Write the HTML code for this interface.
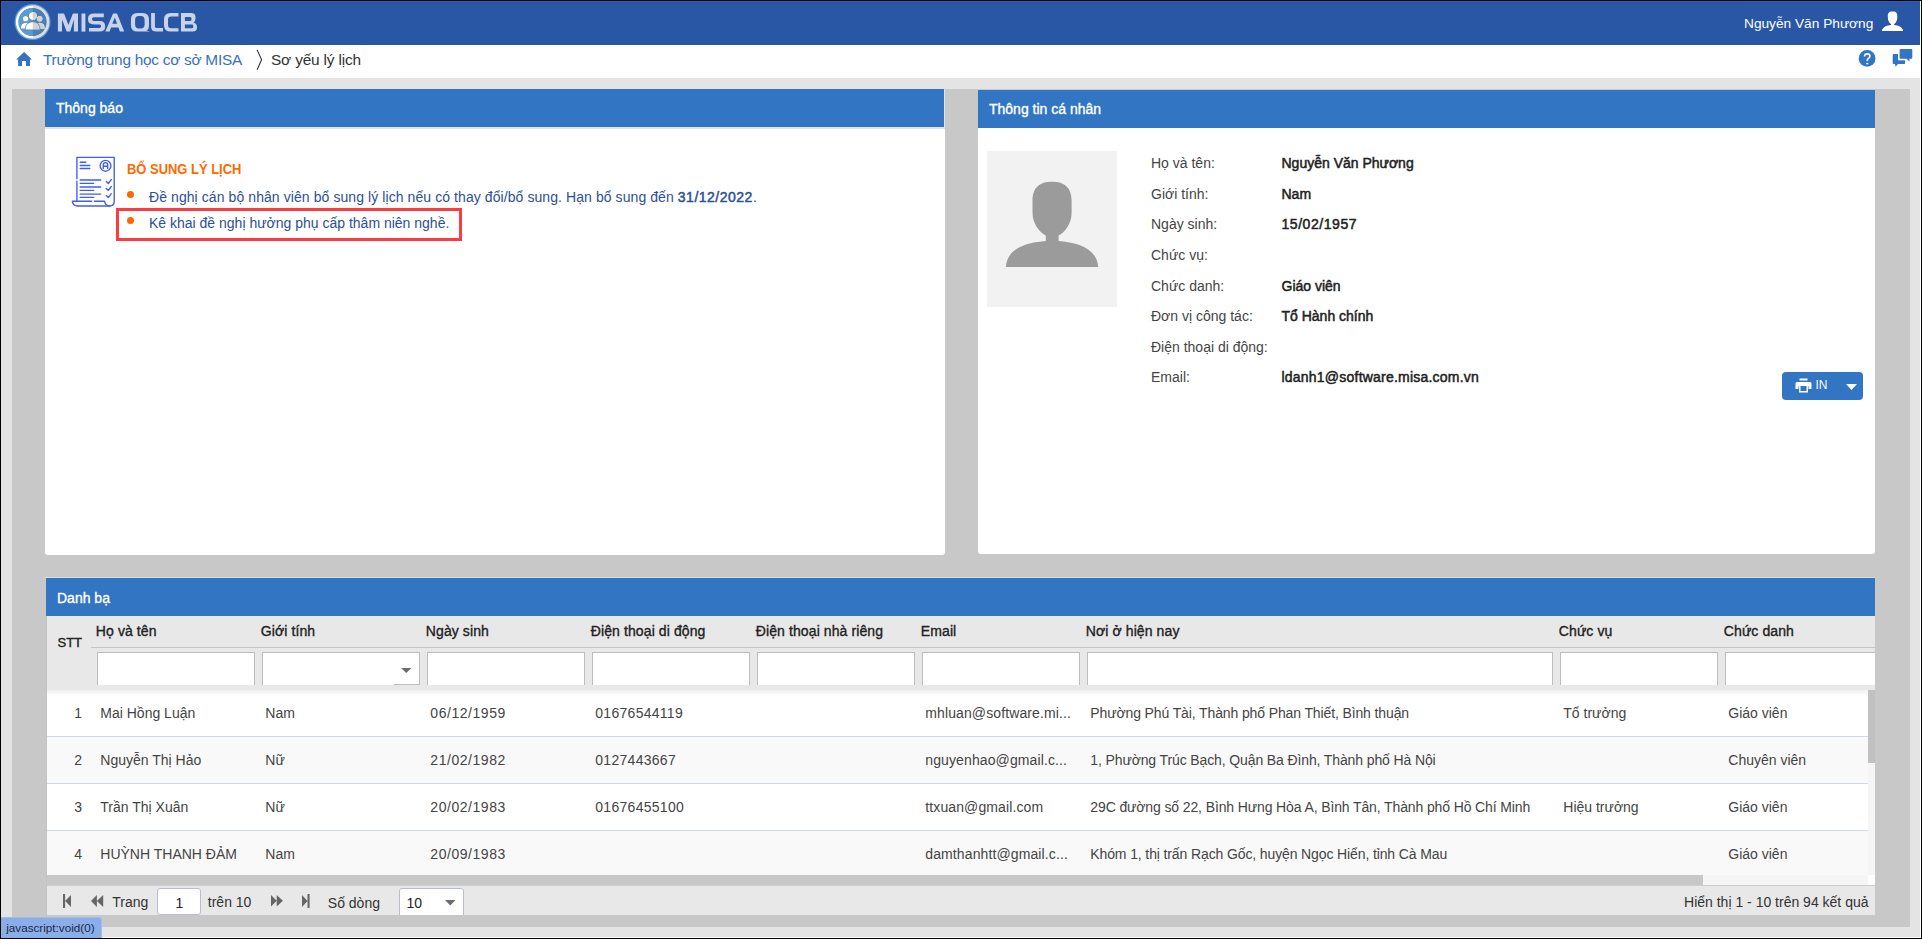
<!DOCTYPE html>
<html><head><meta charset="utf-8">
<style>
*{box-sizing:border-box;margin:0;padding:0}
html,body{width:1922px;height:939px;overflow:hidden;background:#000;font-family:"Liberation Sans",sans-serif}
.t{position:absolute;white-space:nowrap;line-height:1}
#page{position:absolute;left:1px;top:1px;width:1920px;height:937px;background:#fff;overflow:hidden}
#inner{position:absolute;left:0;top:0;width:1919px;height:936px;background:#e4e4e4;overflow:hidden}
#hdr{position:absolute;left:0;top:0;width:1919px;height:44px;background:#2957a5}
#bc{position:absolute;left:0;top:44px;width:1919px;height:33px;background:#fff}
#wrap{position:absolute;left:11px;top:88px;width:1898px;height:838px;background:#c8c8c8}
.panel{position:absolute;background:#fff;border-radius:0 0 3px 3px}
.ph{position:absolute;left:0;top:0;right:0;height:38px;background:#3175c3;color:#fff;font-size:14px;font-weight:bold}
svg{position:absolute;overflow:visible}
.r{position:absolute}
</style></head><body>

<div class="r" style="left:1px;top:1px;width:1920px;height:937px;background:#fff"></div>
<div class="r" style="left:1px;top:1px;width:1919px;height:936px;background:#e4e4e4"></div>
<div style="position:absolute;left:1px;top:1px;width:1919px;height:936px">
  <!-- HEADER -->
  <div id="hdr">
    <div style="position:absolute;left:0;top:0;width:1919px;height:1px;background:#2b5dae"></div>
    <div style="position:absolute;left:0;top:0;width:1px;height:44px;background:#2b5dae"></div>
    <svg style="left:11px;top:1px" width="40" height="40" viewBox="0 0 40 40">
      <defs>
        <clipPath id="lc"><circle cx="20.5" cy="20" r="14.1"/></clipPath>
        <clipPath id="rh"><rect x="20.7" y="0" width="20" height="40"/></clipPath>
        <radialGradient id="halo" cx="0.5" cy="0.5" r="0.5">
          <stop offset="0.93" stop-color="#64a3dc"/><stop offset="1" stop-color="#6aa8de" stop-opacity="0"/>
        </radialGradient>
      </defs>
      <circle cx="20.5" cy="20" r="18.6" fill="url(#halo)"/>
      <circle cx="20.5" cy="20" r="15.3" fill="none" stroke="#fff" stroke-width="2.6"/>
      <path d="M20.7 3.4 A16.6 16.6 0 0 1 20.7 36.6 L20.7 34.1 A14.1 14.1 0 0 0 20.7 5.9 Z" fill="#dcdcdc"/>
      <g clip-path="url(#lc)">
        <rect x="0" y="0" width="20.7" height="40" fill="#5a9bd6"/>
        <rect x="20.7" y="0" width="20" height="40" fill="#4a80b6"/>
      </g>
      <g id="ppl">
        <circle cx="13.6" cy="16.8" r="2.8"/><circle cx="27.7" cy="16.8" r="2.8"/>
        <path d="M8.5 26.8 Q8.7 21 13.5 20.8 Q16 20.9 17 22 L16 26.8 Z"/>
        <path d="M32.9 26.8 Q32.7 21 27.9 20.8 Q25.4 20.9 24.4 22 L25.4 26.8 Z"/>
        <circle cx="20.9" cy="14" r="4"/>
        <path d="M13.2 27.9 Q13.3 19.9 20.8 19.7 Q28 19.9 28.1 27.9 Z" stroke="#4f89c4" stroke-width="0.8"/>
      </g>
      <use href="#ppl" fill="#fff"/>
      <use href="#ppl" fill="#d2d2d2" clip-path="url(#rh)"/>
    </svg>
    <svg style="left:54px;top:7px" width="145" height="30" viewBox="0 0 145 30">
      <g fill="#c6d3ea" fill-rule="evenodd">
        <path d="M2.9 23.6 L2.9 5.5 L9.0 5.5 L13.45 17.0 L17.9 5.5 L23 5.5 L23 23.6 L18.9 23.6 L18.9 11.6 L15.2 23.6 L11.7 23.6 L7.0 11.6 L7.0 23.6 Z"/>
        <path d="M26.5 5.5 L30.4 5.5 L30.4 23.6 L26.5 23.6 Z"/>
        <path d="M48.8 5.5 L39 5.5 Q33 5.5 33 10.6 L33 11.2 Q33 16.4 39 16.4 L44.6 16.4 Q46.1 16.4 46.1 18.1 Q46.1 19.9 44.6 19.9 L34 19.9 L34 23.6 L44.6 23.6 Q50.2 23.6 50.2 18.2 Q50.2 12.9 44.6 12.9 L38.7 12.9 Q37 12.9 37 11 Q37 9.2 38.7 9.2 L48.8 9.2 Z"/>
        <path d="M50.3 23.6 L58.1 5.5 L62 5.5 L69.2 23.6 L64.9 23.6 L63.4 19.5 L56.1 19.5 L54.6 23.6 Z M57.3 15.8 L62.1 15.8 L59.8 9.6 Z"/>
        <g transform="translate(70 0)">
          <path d="M12.3 5.1 L17.6 5.1 Q24 5.1 24 12 L24 16.7 Q24 21.5 21.5 22.6 L25 23.6 L19 23.6 L12.3 23.6 Q5.9 23.6 5.9 16.7 L5.9 12 Q5.9 5.1 12.3 5.1 Z M13.9 8.1 Q10.1 8.1 10.1 12.3 L10.1 16.5 Q10.1 20.6 13.9 20.6 L15.8 20.6 Q19.6 20.6 19.6 16.5 L19.6 12.3 Q19.6 8.1 15.8 8.1 Z"/>
          <path d="M26.1 5.1 L29.9 5.1 L29.9 18.3 Q29.9 19.9 31.5 19.9 L38 19.9 L38 23.6 L31.3 23.6 Q26.1 23.6 26.1 18.4 Z"/>
          <path d="M53.5 5.1 L45.6 5.1 Q39 5.1 39 11.7 L39 17 Q39 23.6 45.6 23.6 L53.5 23.6 L53.5 20.3 L46.3 20.3 Q43 20.3 43 17 L43 11.7 Q43 8.4 46.3 8.4 L53.5 8.4 Z"/>
          <path d="M56 5.1 L66.2 5.1 Q70.5 5.1 70.5 9.3 L70.5 10.6 Q70.5 13.4 68.6 14.6 Q72 15.6 72 19.3 L72 19.5 Q72 23.6 67.8 23.6 L56 23.6 Z M59.9 8.9 L65.2 8.9 Q66.4 8.9 66.4 10 L66.4 11.9 Q66.4 13 65.2 13 L59.9 13 Z M59.9 16.4 L67 16.4 Q68.2 16.4 68.2 17.5 L68.2 19.2 Q68.2 20.3 67 20.3 L59.9 20.3 Z"/>
        </g>
      </g>
    </svg>
    <div class="t" id="uname" style="left:1743px;top:15.5px;font-size:13.7px;color:#fff">Nguyễn Văn Phương</div>
    <svg style="left:1880px;top:10px" width="24" height="21" viewBox="0 0 24 21">
      <path fill="#fff" d="M11.55 0.6 C7.3 0.6 6.8 2.4 6.8 6.2 C6.8 9.6 8.4 12.2 10 13 L10 14.1 C5.5 14.6 1.4 16.2 1 20 L22.1 20 C21.7 16.2 17.6 14.6 13.1 14.1 L13.1 13 C14.7 12.2 16.3 9.6 16.3 6.2 C16.3 2.4 15.8 0.6 11.55 0.6 Z"/>
    </svg>
  </div>
  <!-- BREADCRUMB -->
  <div id="bc">
    <svg style="left:14px;top:7px" width="18" height="16" viewBox="0 0 18 16">
      <path fill="#3473c4" d="M9.1 0 L17 7.4 L15 7.4 L15 13.9 L11 13.9 L11 9 L7 9 L7 13.9 L3.1 13.9 L3.1 7.4 L1.1 7.4 Z"/>
    </svg>
    <div class="t" id="bc1" style="left:42px;top:7.0px;font-size:15.4px;letter-spacing:-0.26px;color:#3a6fbd">Trường trung học cơ sở MISA</div>
    <svg style="left:254px;top:4px" width="10" height="22" viewBox="0 0 10 22">
      <path d="M2.1 0.9 L6.6 10.8 L2.1 20.8" fill="none" stroke="#2a2a2a" stroke-width="1.05"/>
    </svg>
    <div class="t" id="bc2" style="left:270px;top:7.0px;font-size:15.4px;letter-spacing:-0.16px;color:#333">Sơ yếu lý lịch</div>
    <svg style="left:1857px;top:4px" width="18" height="18" viewBox="0 0 18 18">
      <circle cx="9.1" cy="9.4" r="8.4" fill="#3175c3"/>
      <path d="M6.5 7.5 Q6.6 4.9 9.2 4.9 Q11.9 4.9 11.9 7.1 Q11.9 8.5 10.4 9.4 Q9.2 10.2 9.2 11.9" fill="none" stroke="#fff" stroke-width="1.6"/>
      <rect x="8.2" y="13.9" width="2" height="1.4" fill="#fff"/>
    </svg>
    <svg style="left:1889px;top:1px" width="26" height="22" viewBox="0 0 26 22">
      <path fill="#3175c3" d="M3.7 8.1 L14.1 8.1 Q15.1 8.1 15.1 9.1 L15.1 16.9 Q15.1 17.9 14.1 17.9 L8 17.9 L5.5 20.7 L5 17.9 L3.7 17.9 Q2.7 17.9 2.7 16.9 L2.7 9.1 Q2.7 8.1 3.7 8.1 Z"/>
      <rect x="8.1" y="1.6" width="15" height="12.7" fill="#fff"/>
      <path fill="#3175c3" d="M10.6 3.1 L21.3 3.1 Q22.3 3.1 22.3 4.1 L22.3 11.8 Q22.3 12.8 21.3 12.8 L19.5 12.8 L19.5 15.5 L16.5 12.8 L10.6 12.8 Q9.6 12.8 9.6 11.8 L9.6 4.1 Q9.6 3.1 10.6 3.1 Z"/>
    </svg>
  </div>

</div>
<div class="r" style="left:12px;top:89px;width:1898px;height:838px;background:#c8c8c8"></div>
<div class="r" style="left:45px;top:89px;width:900px;height:466px;background:#fff;border-radius:0 0 3px 3px"></div>
<div class="r" style="left:45px;top:89px;width:900px;height:40px;background:#e3e3e3"></div>
<div class="r" style="left:45px;top:89px;width:899px;height:38px;background:#3175c3"></div>
<div class="t" style="left:56.00px;top:101.15px;font-size:14px;color:#fff;-webkit-text-stroke:0.35px currentColor;">Thông báo</div>
<svg style="left:66px;top:150px" width="60" height="62" viewBox="0 0 60 62">
  <g fill="none" stroke="#3f5cf6" stroke-width="1.35" stroke-linecap="round" stroke-linejoin="round">
    <path d="M10.9 28.8 L10.9 7.3 L48.2 7.3 L48.2 51.5 Q48.2 56 43.5 56 Q39.5 56 38.5 51.2 L28.4 51.2"/>
    <path d="M10.9 31.2 L10.9 51.2 L6.3 51.2 Q7 56 11.5 56 L43.5 56"/>
    <path d="M25.7 51.2 L11 51.2"/>
    <circle cx="39.5" cy="15.8" r="5.4"/>
    <path d="M37.3 18.6 L37.3 15 Q37.3 12.6 39.5 12.6 Q41.7 12.6 41.7 15 L41.7 18.6 M37.3 16.2 L41.7 16.2"/>
    <path d="M14.2 12.2 L19.8 12.2 M14.2 15.5 L23.8 15.5 M14.2 18.5 L23.8 18.5"/>
    <path d="M14.2 30 L34.7 30 M14.2 33.3 L27.7 33.3 M14.2 37 L34.7 37 M14.2 40.4 L27.7 40.4 M14.2 44.1 L34.7 44.1 M14.2 47.4 L27.7 47.4"/>
    <path d="M40.3 31.5 L42.3 33.5 L45.3 29.6 M40.3 38.4 L42.3 40.4 L45.3 36.5 M40.3 45.6 L42.3 47.6 L45.3 43.7"/>
  </g>
</svg>
<div class="t" style="left:127.20px;top:162.15px;font-size:14px;color:#ff6a00;font-weight:bold;transform:scaleX(0.925);transform-origin:0 0;">BỔ SUNG LÝ LỊCH</div>
<div class="r" style="left:127px;top:190.8px;width:7px;height:7px;border-radius:50%;background:#ff6600"></div>
<div class="t" style="left:149.00px;top:190.15px;font-size:14px;color:#2c4f9a;letter-spacing:0.08px;">Đề nghị cán bộ nhân viên bổ sung lý lịch nếu có thay đổi/bổ sung. Hạn bổ sung đến <b style="font-weight:normal;-webkit-text-stroke:0.5px currentColor;letter-spacing:0.5px">31/12/2022</b>.</div>
<div class="r" style="left:127px;top:216.9px;width:7px;height:7px;border-radius:50%;background:#ff6600"></div>
<div class="t" style="left:149.00px;top:216.15px;font-size:14px;color:#2c4f9a;">Kê khai đề nghị hưởng phụ cấp thâm niên nghề.</div>
<div class="r" style="left:116px;top:208px;width:346px;height:33px;border:3px solid #fe3b3f;box-sizing:border-box"></div>
<div class="r" style="left:978px;top:90px;width:897px;height:464px;background:#fff;border-radius:0 0 3px 3px"></div>
<div class="r" style="left:978px;top:90px;width:897px;height:38px;background:#3175c3"></div>
<div class="t" style="left:989.00px;top:102.15px;font-size:14px;color:#fff;-webkit-text-stroke:0.35px currentColor;">Thông tin cá nhân</div>
<div class="r" style="left:987px;top:151px;width:130px;height:156px;background:#f2f2f2">
  <svg style="left:0;top:0" width="130" height="156" viewBox="0 0 130 156">
    <path fill="#9b9b9b" d="M65 30.7 C53 30.7 45.5 36 45.5 50 L45.5 62 C45.5 72 52 81 58.8 84.5 L58.8 90 C40 91.5 20 97 18.9 116 L111.2 116 C110 97 90 91.5 71.6 90 L71.6 84.5 C78.5 81 84.6 72 84.6 62 L84.6 50 C84.6 36 77 30.7 65 30.7 Z"/>
  </svg>
</div>
<div class="t" style="left:1151.00px;top:156.15px;font-size:14px;color:#444;">Họ và tên:</div>
<div class="t" style="left:1281.50px;top:156.15px;font-size:14px;color:#222;-webkit-text-stroke:0.5px currentColor;">Nguyễn Văn Phương</div>
<div class="t" style="left:1151.00px;top:186.75px;font-size:14px;color:#444;">Giới tính:</div>
<div class="t" style="left:1281.50px;top:186.75px;font-size:14px;color:#222;-webkit-text-stroke:0.5px currentColor;">Nam</div>
<div class="t" style="left:1151.00px;top:217.35px;font-size:14px;color:#444;">Ngày sinh:</div>
<div class="t" style="left:1281.50px;top:217.35px;font-size:14px;color:#222;-webkit-text-stroke:0.5px currentColor;letter-spacing:0.55px;">15/02/1957</div>
<div class="t" style="left:1151.00px;top:247.95px;font-size:14px;color:#444;">Chức vụ:</div>
<div class="t" style="left:1151.00px;top:278.55px;font-size:14px;color:#444;">Chức danh:</div>
<div class="t" style="left:1281.50px;top:278.55px;font-size:14px;color:#222;-webkit-text-stroke:0.5px currentColor;">Giáo viên</div>
<div class="t" style="left:1151.00px;top:309.15px;font-size:14px;color:#444;">Đơn vị công tác:</div>
<div class="t" style="left:1281.50px;top:309.15px;font-size:14px;color:#222;-webkit-text-stroke:0.5px currentColor;">Tổ Hành chính</div>
<div class="t" style="left:1151.00px;top:339.75px;font-size:14px;color:#444;">Điện thoại di động:</div>
<div class="t" style="left:1151.00px;top:370.35px;font-size:14px;color:#444;">Email:</div>
<div class="t" style="left:1281.50px;top:370.35px;font-size:14px;color:#222;-webkit-text-stroke:0.5px currentColor;letter-spacing:0.22px;">ldanh1@software.misa.com.vn</div>
<div class="r" style="left:1782px;top:372px;width:81px;height:28px;border-radius:4px;background:#3175c3">
  <svg style="left:13px;top:6px" width="17" height="15" viewBox="0 0 17 15">
    <path fill="#fff" d="M4.5 0.5 L12.5 0.5 L12.5 2.5 L4.5 2.5 Z M2 4 L15 4 Q16.5 4 16.5 5.5 L16.5 11 L13.5 11 L13.5 8 L3.5 8 L3.5 11 L0.5 11 L0.5 5.5 Q0.5 4 2 4 Z"/>
    <path fill="none" stroke="#fff" stroke-width="1.5" d="M4.75 7.5 L4.75 13.75 L12.25 13.75 L12.25 7.5"/>
  </svg>
  <svg style="left:64px;top:12px" width="11" height="6" viewBox="0 0 11 6"><path fill="#fff" d="M0 0 L11 0 L5.5 6 Z"/></svg>
</div>
<div class="t" style="left:1815.50px;top:378.84px;font-size:12px;color:#fff;">IN</div>
<div class="r" style="left:45px;top:577px;width:1830px;height:1px;background:#dcdcdc"></div>
<div class="r" style="left:46px;top:578px;width:1829px;height:337px;background:#fff"></div>
<div class="r" style="left:46px;top:578px;width:1829px;height:38px;background:#3175c3"></div>
<div class="t" style="left:57.00px;top:591.15px;font-size:14px;color:#fff;-webkit-text-stroke:0.35px currentColor;">Danh bạ</div>
<div class="r" style="left:46px;top:616px;width:1829px;height:74px;background:#e8e8e8"></div>
<div class="r" style="left:46px;top:616px;width:1px;height:299px;background:#c4c4c4"></div>
<div class="r" style="left:91px;top:647px;width:1784px;height:1px;background:#c4c4c4"></div>
<div class="t" style="left:57.50px;top:636.00px;font-size:13px;color:#222;-webkit-text-stroke:0.35px currentColor;">STT</div>
<div class="r" style="left:47px;top:616px;width:1828px;height:74px;overflow:hidden">
<div class="t" style="left:48.8px;top:8.15px;font-size:14px;color:#222;letter-spacing:0.1px;-webkit-text-stroke:0.35px currentColor;">Họ và tên</div>
<div class="r" style="left:50px;top:36px;width:158px;height:33px;background:#fff;border:1px solid #bdbdbd;border-bottom:none;box-sizing:border-box"></div>
<div class="t" style="left:213.8px;top:8.15px;font-size:14px;color:#222;letter-spacing:0.1px;-webkit-text-stroke:0.35px currentColor;">Giới tính</div>
<div class="r" style="left:215px;top:36px;width:158px;height:33px;background:#fff;border:1px solid #bdbdbd;border-bottom:none;box-sizing:border-box"></div>
<div class="t" style="left:378.8px;top:8.15px;font-size:14px;color:#222;letter-spacing:0.1px;-webkit-text-stroke:0.35px currentColor;">Ngày sinh</div>
<div class="r" style="left:380px;top:36px;width:158px;height:33px;background:#fff;border:1px solid #bdbdbd;border-bottom:none;box-sizing:border-box"></div>
<div class="t" style="left:543.8px;top:8.15px;font-size:14px;color:#222;letter-spacing:0.1px;-webkit-text-stroke:0.35px currentColor;">Điện thoại di động</div>
<div class="r" style="left:545px;top:36px;width:158px;height:33px;background:#fff;border:1px solid #bdbdbd;border-bottom:none;box-sizing:border-box"></div>
<div class="t" style="left:708.8px;top:8.15px;font-size:14px;color:#222;letter-spacing:0.1px;-webkit-text-stroke:0.35px currentColor;">Điện thoại nhà riêng</div>
<div class="r" style="left:710px;top:36px;width:158px;height:33px;background:#fff;border:1px solid #bdbdbd;border-bottom:none;box-sizing:border-box"></div>
<div class="t" style="left:873.8px;top:8.15px;font-size:14px;color:#222;letter-spacing:0.1px;-webkit-text-stroke:0.35px currentColor;">Email</div>
<div class="r" style="left:875px;top:36px;width:158px;height:33px;background:#fff;border:1px solid #bdbdbd;border-bottom:none;box-sizing:border-box"></div>
<div class="t" style="left:1038.8px;top:8.15px;font-size:14px;color:#222;letter-spacing:0.1px;-webkit-text-stroke:0.35px currentColor;">Nơi ở hiện nay</div>
<div class="r" style="left:1040px;top:36px;width:466px;height:33px;background:#fff;border:1px solid #bdbdbd;border-bottom:none;box-sizing:border-box"></div>
<div class="t" style="left:1511.8px;top:8.15px;font-size:14px;color:#222;letter-spacing:0.1px;-webkit-text-stroke:0.35px currentColor;">Chức vụ</div>
<div class="r" style="left:1513px;top:36px;width:158px;height:33px;background:#fff;border:1px solid #bdbdbd;border-bottom:none;box-sizing:border-box"></div>
<div class="t" style="left:1676.8px;top:8.15px;font-size:14px;color:#222;letter-spacing:0.1px;-webkit-text-stroke:0.35px currentColor;">Chức danh</div>
<div class="r" style="left:1678px;top:36px;width:158px;height:33px;background:#fff;border:1px solid #bdbdbd;border-bottom:none;box-sizing:border-box"></div>
</div>
<div class="r" style="left:394px;top:684px;width:26px;height:1px;background:#bdbdbd"></div>
<svg style="left:401px;top:668px" width="10.5" height="5" viewBox="0 0 10.5 5"><path fill="#6d6d6d" d="M0 0 L10.5 0 L5.25 5 Z"/></svg>
<div class="r" style="left:47px;top:690px;width:1828px;height:185px;overflow:hidden">
<div class="r" style="left:0;top:0px;width:1828px;height:47px;background:#fff;border-bottom:1px solid #cfd9e8;box-sizing:border-box"></div>
<div class="t" style="right:1793px;top:16.15px;font-size:14px;color:#444">1</div>
<div class="t" style="left:53.3px;top:16.15px;font-size:14px;color:#444;">Mai Hồng Luận</div>
<div class="t" style="left:218.3px;top:16.15px;font-size:14px;color:#444;">Nam</div>
<div class="t" style="left:383.3px;top:16.15px;font-size:14px;color:#444;letter-spacing:0.55px;">06/12/1959</div>
<div class="t" style="left:548.3px;top:16.15px;font-size:14px;color:#444;letter-spacing:0.28px;">01676544119</div>
<div class="t" style="left:878.3px;top:16.15px;font-size:14px;color:#444;letter-spacing:0.11px;">mhluan@software.mi...</div>
<div class="t" style="left:1043.3px;top:16.15px;font-size:14px;color:#444;letter-spacing:-0.12px;">Phường Phú Tài, Thành phố Phan Thiết, Bình thuận</div>
<div class="t" style="left:1516.3px;top:16.15px;font-size:14px;color:#444;">Tổ trưởng</div>
<div class="t" style="left:1681.3px;top:16.15px;font-size:14px;color:#444;">Giáo viên</div>
<div class="r" style="left:0;top:47px;width:1828px;height:47px;background:#f9f9f9;border-bottom:1px solid #cfd9e8;box-sizing:border-box"></div>
<div class="t" style="right:1793px;top:63.00px;font-size:14px;color:#444">2</div>
<div class="t" style="left:53.3px;top:63.00px;font-size:14px;color:#444;">Nguyễn Thị Hảo</div>
<div class="t" style="left:218.3px;top:63.00px;font-size:14px;color:#444;">Nữ</div>
<div class="t" style="left:383.3px;top:63.00px;font-size:14px;color:#444;letter-spacing:0.55px;">21/02/1982</div>
<div class="t" style="left:548.3px;top:63.00px;font-size:14px;color:#444;letter-spacing:0.28px;">0127443667</div>
<div class="t" style="left:878.3px;top:63.00px;font-size:14px;color:#444;letter-spacing:0.11px;">nguyenhao@gmail.c...</div>
<div class="t" style="left:1043.3px;top:63.00px;font-size:14px;color:#444;letter-spacing:-0.12px;">1, Phường Trúc Bạch, Quận Ba Đình, Thành phố Hà Nội</div>
<div class="t" style="left:1681.3px;top:63.00px;font-size:14px;color:#444;">Chuyên viên</div>
<div class="r" style="left:0;top:94px;width:1828px;height:47px;background:#fff;border-bottom:1px solid #cfd9e8;box-sizing:border-box"></div>
<div class="t" style="right:1793px;top:109.85px;font-size:14px;color:#444">3</div>
<div class="t" style="left:53.3px;top:109.85px;font-size:14px;color:#444;">Trần Thị Xuân</div>
<div class="t" style="left:218.3px;top:109.85px;font-size:14px;color:#444;">Nữ</div>
<div class="t" style="left:383.3px;top:109.85px;font-size:14px;color:#444;letter-spacing:0.55px;">20/02/1983</div>
<div class="t" style="left:548.3px;top:109.85px;font-size:14px;color:#444;letter-spacing:0.28px;">01676455100</div>
<div class="t" style="left:878.3px;top:109.85px;font-size:14px;color:#444;letter-spacing:0.11px;">ttxuan@gmail.com</div>
<div class="t" style="left:1043.3px;top:109.85px;font-size:14px;color:#444;letter-spacing:-0.12px;">29C đường số 22, Bình Hưng Hòa A, Bình Tân, Thành phố Hồ Chí Minh</div>
<div class="t" style="left:1516.3px;top:109.85px;font-size:14px;color:#444;">Hiệu trưởng</div>
<div class="t" style="left:1681.3px;top:109.85px;font-size:14px;color:#444;">Giáo viên</div>
<div class="r" style="left:0;top:141px;width:1828px;height:47px;background:#f9f9f9;border-bottom:1px solid #cfd9e8;box-sizing:border-box"></div>
<div class="t" style="right:1793px;top:156.70px;font-size:14px;color:#444">4</div>
<div class="t" style="left:53.3px;top:156.70px;font-size:14px;color:#444;">HUỲNH THANH ĐẢM</div>
<div class="t" style="left:218.3px;top:156.70px;font-size:14px;color:#444;">Nam</div>
<div class="t" style="left:383.3px;top:156.70px;font-size:14px;color:#444;letter-spacing:0.55px;">20/09/1983</div>
<div class="t" style="left:878.3px;top:156.70px;font-size:14px;color:#444;letter-spacing:0.11px;">damthanhtt@gmail.c...</div>
<div class="t" style="left:1043.3px;top:156.70px;font-size:14px;color:#444;letter-spacing:-0.12px;">Khóm 1, thị trấn Rạch Gốc, huyện Ngọc Hiển, tỉnh Cà Mau</div>
<div class="t" style="left:1681.3px;top:156.70px;font-size:14px;color:#444;">Giáo viên</div>
<div class="r" style="left:0;top:0;width:1828px;height:6px;background:linear-gradient(rgba(0,0,0,0.06),rgba(0,0,0,0))"></div>
</div>
<div class="r" style="left:1868px;top:690px;width:7px;height:185px;background:#f5f5f5"></div>
<div class="r" style="left:1868px;top:690px;width:7px;height:73px;background:#c1c1c1"></div>
<div class="r" style="left:47px;top:875px;width:1828px;height:11px;background:#f5f5f5"></div>
<div class="r" style="left:47px;top:875px;width:1656px;height:11px;background:#c8c8c8"></div>
<div class="r" style="left:1868px;top:875px;width:7px;height:11px;background:#fff"></div>
<div class="r" style="left:47px;top:885px;width:1828px;height:1px;background:#cdcdcd"></div>
<div class="r" style="left:47px;top:886px;width:1828px;height:29px;background:#e8e8e8"></div>
<svg style="left:62.8px;top:894px" width="9" height="14" viewBox="0 0 9 14"><path fill="#666" d="M0 0 L2.1 0 L2.1 14 L0 14 Z M2.1 7 L8 1 L8 13 Z"/></svg>
<svg style="left:90.6px;top:895px" width="13" height="12" viewBox="0 0 13 12"><path fill="#666" d="M0 6 L5.9 0 L5.9 12 Z M5.9 6 L12.2 0 L12.2 12 Z"/></svg>
<div class="t" style="left:112.20px;top:895.15px;font-size:14px;color:#333;">Trang</div>
<div class="r" style="left:157px;top:888px;width:44px;height:27px;background:#fff;border:1px solid #b9bdd0;border-radius:3px;box-sizing:border-box"></div>
<div class="t" style="left:175.50px;top:896.15px;font-size:14px;color:#222;">1</div>
<div class="t" style="left:207.80px;top:895.15px;font-size:14px;color:#333;">trên 10</div>
<svg style="left:270.5px;top:895.2px" width="13" height="12" viewBox="0 0 13 12"><path fill="#666" d="M0 0 L5.7 5.75 L0 11.5 Z M5.7 0 L11.9 5.75 L5.7 11.5 Z"/></svg>
<svg style="left:301.5px;top:894px" width="9" height="14" viewBox="0 0 9 14"><path fill="#666" d="M0 1 L5.5 7 L0 13 Z M5.5 0 L7.6 0 L7.6 14 L5.5 14 Z"/></svg>
<div class="t" style="left:327.80px;top:896.15px;font-size:14px;color:#333;">Số dòng</div>
<div class="r" style="left:399px;top:888px;width:65px;height:30px;background:#fff;border:1px solid #b9bdd0;border-radius:3px;box-sizing:border-box"></div>
<div class="t" style="left:406.50px;top:896.15px;font-size:14px;color:#222;">10</div>
<svg style="left:445px;top:900px" width="10.5" height="5.5" viewBox="0 0 10.5 5.5"><path fill="#6d6d6d" d="M0 0 L10.5 0 L5.25 5.5 Z"/></svg>
<div class="t" style="right:53.50px;top:895.15px;font-size:14px;color:#333;">Hiển thị 1 - 10 trên 94 kết quả</div>
<div class="r" style="left:12px;top:915px;width:1898px;height:12px;background:#c8c8c8"></div>
<div class="r" style="left:1px;top:917px;width:100.5px;height:21px;background:#89aee9;border-top:1px solid #a3bde6;border-right:1px solid #a3bde6;border-radius:0 3px 0 0;box-sizing:border-box"></div>
<div class="t" style="left:6.20px;top:922.10px;font-size:11.7px;color:#1d2a44;">javascript:void(0)</div>
</body></html>
